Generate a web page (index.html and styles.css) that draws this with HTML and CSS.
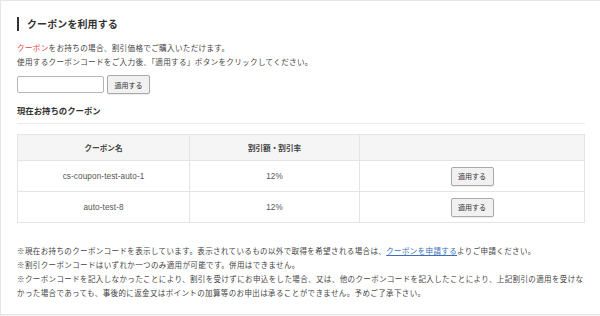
FILE: index.html
```html
<!DOCTYPE html>
<html lang="ja">
<head>
    <meta charset="UTF-8">
    <meta name="viewport" content="width=device-width, initial-scale=1.0">
    <title>クーポンを利用する</title>
    <link rel="stylesheet" href="styles.css">
</head>
<body>
    <div class="card">
        <h2 class="title">クーポンを利用する</h2>
        <p class="lead">
            <span class="accent">クーポン</span>をお持ちの場合、割引価格でご購入いただけます。<br>
            使用するクーポンコードをご入力後、「適用する」ボタンをクリックしてください。
        </p>
        <form class="code-form" onsubmit="return false">
            <input type="text" class="code-input" name="coupon">
            <button type="submit" class="btn">適用する</button>
        </form>

        <h3 class="subtitle">現在お持ちのクーポン</h3>
        <table class="coupons">
            <thead>
                <tr>
                    <th class="col-name">クーポン名</th>
                    <th class="col-rate">割引額・割引率</th>
                    <th></th>
                </tr>
            </thead>
            <tbody>
                <tr>
                    <td>cs-coupon-test-auto-1</td>
                    <td>12%</td>
                    <td><button type="button" class="btn">適用する</button></td>
                </tr>
                <tr>
                    <td>auto-test-8</td>
                    <td>12%</td>
                    <td><button type="button" class="btn">適用する</button></td>
                </tr>
            </tbody>
        </table>

        <div class="notes">
            <p>※現在お持ちのクーポンコードを表示しています。表示されているもの以外で取得を希望される場合は、<a href="#">クーポンを申請する</a>よりご申請ください。</p>
            <p>※割引クーポンコードはいずれか一つのみ適用が可能です。併用はできません。</p>
            <p>※クーポンコードを記入しなかったことにより、割引を受けずにお申込をした場合、又は、他のクーポンコードを記入したことにより、上記割引の適用を受けなかった場合であっても、事後的に返金又はポイントの加算等のお申出は承ることができません。予めご了承下さい。</p>
        </div>
    </div>
</body>
</html>
```

FILE: styles.css
```css
body {
    margin: 0;
    background-color: #f2f2f2;
    font-family: "Noto Sans CJK JP", "Noto Sans", sans-serif;
    color: #333;
}
.card {
    height: 297px;
    background: white;
    border: 1px solid #e6e6e6;
    border-right: none;
    padding: 16px 0 0 16px;
}
.title {
    margin: 0;
    height: 14px;
    line-height: 14px;
    padding-left: 8px;
    border-left: 2px solid #333;
    font-size: 10px;
    font-weight: bold;
    letter-spacing: 0.1px;
}
.lead {
    margin: 10px 0 0;
    font-size: 7.6px;
    line-height: 14px;
    letter-spacing: 0.3px;
    color: #444;
}
.accent {
    color: #e5433c;
}
.code-form {
    display: flex;
    align-items: center;
    gap: 3px;
    margin-top: 6px;
    height: 19px;
}
.code-input {
    box-sizing: border-box;
    width: 87px;
    height: 17px;
    margin: 0;
    border: 1px solid #b5b5b5;
    border-radius: 2px;
    background: white;
}
.btn {
    box-sizing: border-box;
    height: 19px;
    width: 43px;
    padding: 0;
    font-family: inherit;
    font-size: 7px;
    color: #333;
    background-color: #f1f1f1;
    border: 1px solid #a9a9a9;
    border-radius: 2px;
    box-shadow: 0 1px 1px rgba(0, 0, 0, 0.08);
    cursor: pointer;
}
.subtitle {
    margin: 9px 0 0;
    width: 568px;
    line-height: 14px;
    padding-bottom: 6px;
    border-bottom: 1px solid #ececec;
    font-size: 8.4px;
    font-weight: bold;
}
.coupons {
    width: 568px;
    margin-top: 10px;
    border-collapse: collapse;
    table-layout: fixed;
    font-size: 7.6px;
}
.coupons th,
.coupons td {
    border: 1px solid #e4e4e4;
    text-align: center;
    padding: 0;
}
.coupons th {
    height: 25px;
    background-color: #f5f5f5;
    font-weight: bold;
    color: #444;
}
.coupons td {
    height: 30px;
    color: #555;
    font-size: 8.2px;
    letter-spacing: 0.1px;
    font-family: "Liberation Sans", "Noto Sans CJK JP", sans-serif;
}
.coupons .col-name {
    width: 171px;
}
.coupons .col-rate {
    width: 169px;
}
.coupons td .btn {
    display: block;
    margin: 0 auto;
    letter-spacing: 0;
    font-family: "Noto Sans CJK JP", sans-serif;
}
.notes {
    margin-top: 21px;
    width: 569px;
    font-size: 7.5px;
    line-height: 14px;
    letter-spacing: 0.38px;
    color: #444;
}
.notes p {
    margin: 0;
}
.notes a {
    color: #3b6fb6;
    text-decoration: underline;
}
```
